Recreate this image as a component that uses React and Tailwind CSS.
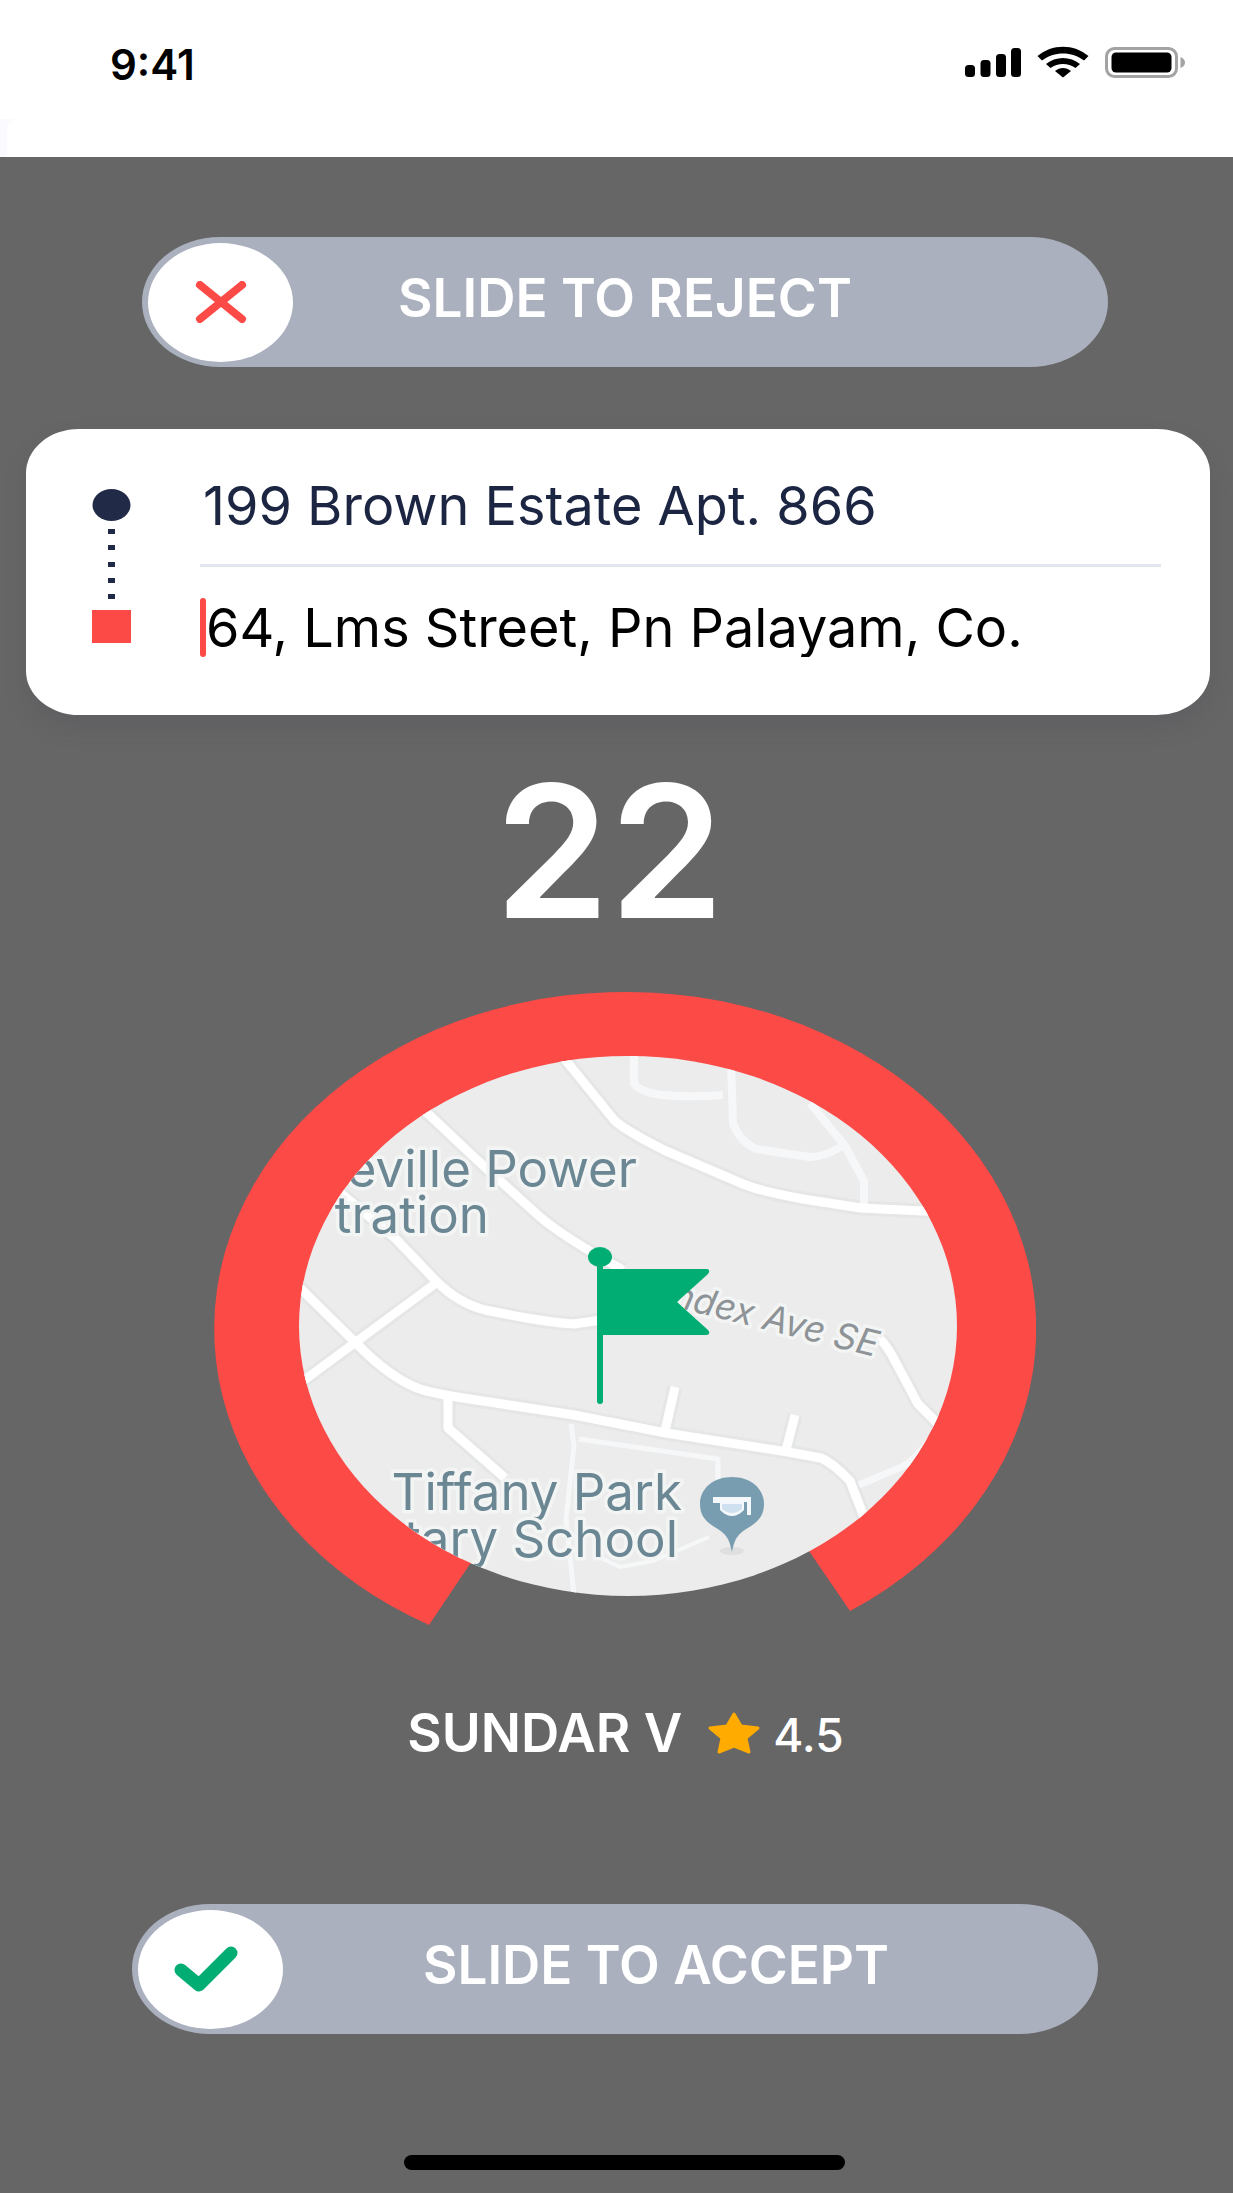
import React from "react";

function StatusBar() {
  return (
    <header className="bg-white h-[157px] flex flex-col">
      <div className="h-[119px] flex items-start justify-between pl-[110px] pr-[48px]">
        <time className="mt-[41px] text-[42px] leading-[48px] font-semibold text-black">9:41</time>
        <svg className="mt-[44px]" width="222" height="36" viewBox="0 0 222 36" role="img" aria-label="Signal, Wi-Fi and battery">
          <rect x="2" y="21" width="10" height="12" rx="3.500" />
          <rect x="17.500" y="16" width="10" height="17" rx="3.500" />
          <rect x="33" y="10" width="10" height="23" rx="3.500" />
          <rect x="48" y="4" width="10" height="29" rx="3.500" />
          <path d="M74.500 12C89 -0.500 111 -0.500 125.500 12L121 16.500C109 7 91 7 79 16.500Z" />
          <path d="M83 20C92.500 12 107.500 12 117 20L112.500 24C105 18.500 95 18.500 87.500 24Z" />
          <path d="M92 27C97 23 103 23 108 27L100 33.500Z" />
          <rect x="143.500" y="4.500" width="70" height="28" rx="8" fill="none" stroke="#a3a3a3" strokeWidth="3" />
          <rect x="148.500" y="8.500" width="60" height="20" rx="4.500" />
          <path d="M217.500 13Q222 15 222 18.500T217.500 24Z" fill="#a3a3a3" />
        </svg>
      </div>
      <div className="flex-1 bg-[#fafaff]">
        <div className="h-full bg-white ml-[7px] rounded-tl-[10px]" />
      </div>
    </header>
  );
}

function SlideControl({ id, label, labelClass, className, children }) {
  return (
    <div
      className={`relative h-[130px] rounded-[78px/65px] bg-[#abb0bf] flex items-center ${className}`}
    >
      <span className="absolute left-[6px] w-[145px] h-[119px] rounded-[50%] bg-white flex items-center justify-center">
        {children}
      </span>
      <label
        htmlFor={id}
        className={`flex-1 text-center text-white font-semibold text-[53px] leading-[60px] pb-[8px] ${labelClass}`}
      >
        {label}
      </label>
      <input
        id={id}
        type="range"
        min="0"
        max="100"
        defaultValue="0"
        className="absolute inset-0 w-full h-full opacity-0 cursor-pointer"
      />
    </div>
  );
}

function TripCard() {
  return (
    <section className="ml-[26px] mr-[23px] mt-[62px] h-[286px] bg-white rounded-[53px/44px] shadow-[0_12px_24px_rgba(60,60,80,0.15)] flex pl-[66px] pr-[49px]">
      <svg className="mt-[60px] shrink-0" width="39" height="154" viewBox="0 0 39 154" aria-hidden="true">
        <ellipse cx="19.500" cy="16" rx="19" ry="16" fill="#212b47" />
        {[40, 56, 73, 89, 105].map((y) => (
          <rect key={y} x="16" y={y} width="7" height="5" fill="#212b47" />
        ))}
        <rect y="121" width="39" height="33" fill="#fc4a47" />
      </svg>
      <div className="flex-1 min-w-0 ml-[69px]">
        <div className="h-[138px] border-b-[3px] border-[#e4e6ef] pt-[46px]">
          <input
            aria-label="Pickup address"
            defaultValue="199 Brown Estate Apt. 866"
            className="block w-full h-[60px] pl-[3px] text-[54px] text-[#1c2642] outline-none"
          />
        </div>
        <div className="mt-[30px] h-[60px] flex items-center">
          <span className="w-[6px] h-[59px] rounded-full bg-[#fc4a47] shrink-0" />
          <input
            aria-label="Drop address"
            defaultValue="64, Lms Street, Pn Palayam, Co."
            className="block w-full min-w-0 h-[60px] text-[54px] text-black outline-none"
          />
        </div>
      </div>
    </section>
  );
}

function MapDial() {
  return (
    <svg className="ml-[16px]" width="823" height="635" viewBox="0 0 823 635" role="img" aria-label="Pickup location map">
      <defs>
        <clipPath id="dial">
          <ellipse cx="415" cy="335" rx="329" ry="270" />
        </clipPath>
      </defs>
      <path d="M216 634A411 337 0 1 1 637 620L596 560L415 500L257 573Z" fill="#fc4a47" />
      <g clipPath="url(#dial)">
        <rect x="80" y="60" width="670" height="550" fill="#ececec" />
        <g fill="none" stroke="#e5e6e6" strokeWidth="15" strokeLinejoin="round">
          <path d="M350 66L402 130Q415 141 453 160L530 193Q550 201 590 208L648 217L730 221" />
          <path d="M210 118L263 168L326 225Q350 246 410 279" />
          <path d="M125 200L182 247L223 290Q245 312 272 319Q330 331 361 333L388 329" />
          <path d="M223 292L90 390" />
          <path d="M85 295L144 353Q175 385 204 397Q220 403 270 410L361 424L453 442L575 461L608 467Q620 472 637 490L651 526" />
          <path d="M235 407V437L292 487" />
          <path d="M452 440L462 396M573 459L582 424" />
          <path d="M665 346Q674 354 682 370L705 413L732 440" />
        </g>
        <g fill="none" stroke="#f6f7f8" strokeWidth="8" strokeLinejoin="round">
          <path d="M421 60V92Q424 99 442 103Q470 107 510 104" />
          <path d="M518 70L520 132Q526 150 543 158L597 166Q612 166 629 155" />
          <path d="M597 112L632 155L651 190V216" />
          <path d="M358 433L361 455L353 528L361 604" strokeWidth="5" />
          <path d="M366 448L505 468V489" strokeWidth="5" />
          <path d="M390 568L407 576L440 570L496 546" strokeWidth="4" />
          <path d="M720 445Q700 472 686 477L646 494" strokeWidth="7" />
        </g>
        <g fill="none" stroke="#ffffff" strokeWidth="9" strokeLinejoin="round">
          <path d="M350 66L402 130Q415 141 453 160L530 193Q550 201 590 208L648 217L730 221" />
          <path d="M210 118L263 168L326 225Q350 246 410 279" />
          <path d="M125 200L182 247L223 290Q245 312 272 319Q330 331 361 333L388 329" />
          <path d="M223 292L90 390" />
          <path d="M85 295L144 353Q175 385 204 397Q220 403 270 410L361 424L453 442L575 461L608 467Q620 472 637 490L651 526" />
          <path d="M235 407V437L292 487" />
          <path d="M452 440L462 396M573 459L582 424" />
          <path d="M665 346Q674 354 682 370L705 413L732 440" />
          <path d="M120 468Q145 505 190 540" />
        </g>
        <g
          fontFamily="Inter, sans-serif"
          fill="#6b8793"
          stroke="#f3f4f4"
          strokeWidth="7"
          strokeLinejoin="round"
          paintOrder="stroke"
          fontSize="51"
          textAnchor="end"
        >
          <text x="424" y="196">eville Power</text>
          <text x="276" y="242">tration</text>
          <text x="469" y="519">Tiffany Park</text>
          <text x="465" y="566">tary School</text>
          <text x="662" y="366" fontSize="36" fontStyle="italic" fill="#8d9396" transform="rotate(14 662 366)">
            ndex Ave SE
          </text>
        </g>
        <ellipse cx="519" cy="560" rx="12" ry="4" fill="#dedfe0" />
        <path d="M519 561C516 546 513 543 500 535C491 529 487 523 487 513C487 497 501 486 519 486S551 497 551 513C551 523 547 529 538 535C525 543 522 546 519 561Z" fill="#789db0" />
        <path d="M500 506H538V524H534V511H531V519Q519 531 507 519V512H500Z" fill="#f4f8fb" />
        <path d="M509 513H529V518Q519 526 509 518Z" fill="#cfe0f0" />
      </g>
      <g fill="#02ad73">
        <ellipse cx="387" cy="266" rx="12" ry="10" />
        <path d="M384 266H390V410Q390 413 387 413T384 410Z" />
        <path d="M384 278H494Q498 279 495 283L464 311L495 339Q498 343 494 344H384Z" />
      </g>
    </svg>
  );
}

export default function App() {
  return (
    <div className="min-h-screen bg-[#666666] flex flex-col font-['Inter',sans-serif]">
      <StatusBar />
      <main className="flex-1 flex flex-col">
        <SlideControl id="reject" label="SLIDE TO REJECT" className="ml-[142px] mr-[125px] mt-[80px]" labelClass="">
          <svg width="52" height="42" viewBox="0 0 52 42" fill="none" stroke="#fc4a47" strokeWidth="8" strokeLinecap="round" aria-hidden="true">
            <path d="M5 4L47 38M47 4L5 38" />
          </svg>
        </SlideControl>

        <TripCard />

        <p className="mt-[32px] mr-[14px] text-center text-white font-semibold text-[184px] leading-[208px]">22</p>

        <div className="mt-[36px] flex justify-center">
          <MapDial />
        </div>

        <div className="mt-[77px] pl-[18px] h-[60px] flex items-center justify-center text-white">
          <h1 className="font-semibold text-[53px] leading-[60px]">SUNDAR V</h1>
          <svg className="ml-[26px]" width="52" height="42" viewBox="0 0 52 42" fill="#ffab00" stroke="#ffab00" strokeWidth="3" strokeLinejoin="round" aria-hidden="true">
            <path d="M26 2L33 14L50 16L38 26L41 40L26 34L11 40L14 26L2 16L19 14Z" />
          </svg>
          <span className="ml-[13px] pt-[4px] font-medium text-[46px] leading-[56px]">4.5</span>
        </div>

        <SlideControl id="accept" label="SLIDE TO ACCEPT" className="ml-[132px] mr-[135px] mt-[141px]" labelClass="pl-[82px]">
          <svg className="mr-[10px]" width="64" height="48" viewBox="0 0 64 48" fill="none" stroke="#02ad73" strokeWidth="13" strokeLinecap="round" strokeLinejoin="round" aria-hidden="true">
            <path d="M7 25L25 40L57 8" />
          </svg>
        </SlideControl>
      </main>
      <footer className="mt-[60px] pl-[16px] pb-[23px] flex justify-center">
        <div className="w-[441px] h-[15px] rounded-full bg-black" />
      </footer>
    </div>
  );
}
